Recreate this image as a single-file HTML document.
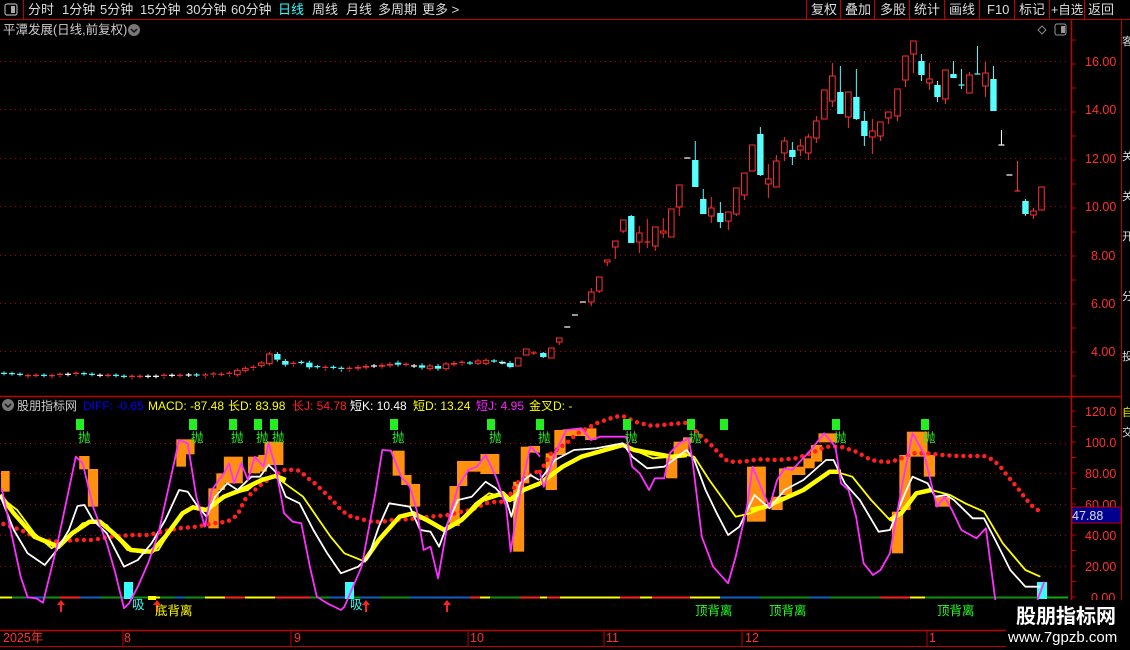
<!DOCTYPE html>
<html><head><meta charset="utf-8">
<style>
body{margin:0;background:#000;width:1130px;height:650px;overflow:hidden;font-family:"Liberation Sans","Noto Sans CJK SC",sans-serif;}
svg{position:absolute;left:0;top:0}
text{font-family:"Liberation Sans","Noto Sans CJK SC",sans-serif}
</style></head><body>
<svg id="s" width="1130" height="650" xmlns="http://www.w3.org/2000/svg">
<rect width="1130" height="650" fill="#000"/>
<line x1="0" y1="19.5" x2="1130" y2="19.5" stroke="#c00000"/>
<line x1="23.5" y1="0" x2="23.5" y2="19" stroke="#c00000"/>
<rect x="5" y="4" width="12" height="11" rx="2" fill="none" stroke="#aaa" stroke-width="1.2"/><rect x="11" y="6" width="4" height="7" fill="#aaa"/>
<g font-size="13" fill="#ddd">
<text x="28" y="14">分时</text><text x="62" y="14">1分钟</text><text x="100" y="14">5分钟</text><text x="140" y="14">15分钟</text><text x="186" y="14">30分钟</text><text x="231" y="14">60分钟</text>
<text x="278" y="14" fill="#3ff">日线</text><text x="312" y="14">周线</text><text x="346" y="14">月线</text><text x="378" y="14">多周期</text><text x="422" y="14">更多 &gt;</text>
<text x="811" y="14">复权</text><text x="845" y="14">叠加</text><text x="880" y="14">多股</text><text x="914" y="14">统计</text><text x="949" y="14">画线</text><text x="987" y="14">F10</text><text x="1019" y="14">标记</text><text x="1051" y="14" font-size="12.5">+自选</text><text x="1088" y="14">返回</text>
</g>
<g stroke="#c00000"><line x1="806.5" y1="0" x2="806.5" y2="19"/><line x1="840.5" y1="0" x2="840.5" y2="19"/><line x1="874.5" y1="0" x2="874.5" y2="19"/><line x1="909.5" y1="0" x2="909.5" y2="19"/><line x1="944.5" y1="0" x2="944.5" y2="19"/><line x1="979.5" y1="0" x2="979.5" y2="19"/><line x1="1014.5" y1="0" x2="1014.5" y2="19"/><line x1="1049.5" y1="0" x2="1049.5" y2="19"/><line x1="1084.5" y1="0" x2="1084.5" y2="19"/></g>
<text x="3" y="34" font-size="12.5" fill="#ccc">平潭发展(日线,前复权)</text>
<circle cx="134" cy="30" r="6" fill="#777"/><path d="M131 29l3 3 3-3" stroke="#111" stroke-width="1.5" fill="none"/>
<path d="M1042 26l4 4-4 4-4-4z" fill="none" stroke="#888"/>
<rect x="1055" y="24" width="11" height="11" rx="2" fill="none" stroke="#999"/><rect x="1061" y="26" width="4" height="7" fill="#999"/>
<line x1="1071.5" y1="20" x2="1071.5" y2="630" stroke="#c00000" stroke-width="1.5"/>
<line x1="1121.5" y1="20" x2="1121.5" y2="600" stroke="#c00000"/>
<line x1="0" y1="396.5" x2="1121" y2="396.5" stroke="#c00000" stroke-width="1.5"/>
<line x1="0" y1="630.5" x2="1071" y2="630.5" stroke="#c00000" stroke-width="1.5"/>
<line x1="0" y1="646.5" x2="1071" y2="646.5" stroke="#c00000"/>
<g id="grid"></g>
<g font-size="12.5" fill="#ff3030">
<text x="1085" y="66">16.00</text><text x="1085" y="114">14.00</text><text x="1085" y="163">12.00</text><text x="1085" y="211">10.00</text><text x="1091" y="260">8.00</text><text x="1091" y="308">6.00</text><text x="1091" y="356">4.00</text>
<text x="1085" y="416">120.0</text><text x="1085" y="447">100.0</text><text x="1085" y="478">80.00</text><text x="1085" y="509">60.00</text><text x="1085" y="540">40.00</text><text x="1085" y="571">20.00</text><text x="1091" y="602">0.00</text>
</g>
<rect x="1072" y="507" width="49" height="16" fill="#000090" stroke="#c00000"/>
<text x="1072" y="520" font-size="12.5" fill="#ddd">47.88</text>
<g font-size="11" fill="#ddd"><text x="1122" y="45">客</text><text x="1122" y="160">关</text><text x="1122" y="200">关</text><text x="1122" y="240">开</text><text x="1122" y="300">分</text><text x="1122" y="360">投</text><text x="1122" y="416" fill="#ee0">自</text><text x="1122" y="436">交</text></g>
<circle cx="8" cy="405" r="6" fill="#777"/><path d="M5 404l3 3 3-3" stroke="#111" stroke-width="1.5" fill="none"/>
<g font-size="12"><text x="17" y="410" fill="#ccc">股朋指标网</text><text x="83" y="410" fill="#0000ff">DIFF: -0.65</text><text x="148" y="410" fill="#ff0">MACD: -87.48</text><text x="228" y="410" fill="#ff0">长D: 83.98</text><text x="292" y="410" fill="#f22">长J: 54.78</text><text x="350" y="410" fill="#fff">短K: 10.48</text><text x="413" y="410" fill="#ff0">短D: 13.24</text><text x="476" y="410" fill="#f2f">短J: 4.95</text><text x="529" y="410" fill="#ff0">金叉D: -</text></g>
<g id="c"></g>
<g font-size="12.5"><text x="132" y="609" fill="#3ff">吸</text><text x="350" y="609" fill="#3ff">吸</text><text x="155" y="615" fill="#ff0">底背离</text><text x="695" y="615" fill="#2f2">顶背离</text><text x="769" y="615" fill="#2f2">顶背离</text><text x="937" y="615" fill="#2f2">顶背离</text></g>
<g font-size="12.5" fill="#ff3030"><text x="3" y="642">2025年</text><text x="124" y="642">8</text><text x="294" y="642">9</text><text x="470" y="642">10</text><text x="606" y="642">11</text><text x="745" y="642">12</text><text x="929" y="642">1</text></g>
<g stroke="#c00000"><line x1="123" y1="630" x2="123" y2="646"/><line x1="291" y1="630" x2="291" y2="646"/><line x1="468" y1="630" x2="468" y2="646"/><line x1="604" y1="630" x2="604" y2="646"/><line x1="742" y1="630" x2="742" y2="646"/><line x1="927" y1="630" x2="927" y2="646"/></g>
<rect x="1006" y="600" width="124" height="50" fill="#000"/>
<text x="1016" y="623" font-size="20" font-weight="bold" fill="#fff">股朋指标网</text>
<text x="1008" y="642" font-size="15" fill="#fff">www.7gpzb.com</text>
</svg>
<script>
var NS="http://www.w3.org/2000/svg",g=document.getElementById('c'),gr=document.getElementById('grid');
function el(t,a,p){var e=document.createElementNS(NS,t);for(var k in a)e.setAttribute(k,a[k]);(p||g).appendChild(e);return e;}
[61,109,158,206,255,303,351,443,473,504,535,566].forEach(function(y){el('line',{x1:0,y1:y+.5,x2:1068,y2:y+.5,stroke:'#c00000','stroke-dasharray':'1 4'},gr);});
for(var y=40;y<390;y+=24)el('line',{x1:1071,y1:y,x2:1076,y2:y,stroke:'#c00000'},gr);
for(var y=411;y<600;y+=15.5)el('line',{x1:1071,y1:y,x2:1076,y2:y,stroke:'#c00000'},gr);
var RED='#ff3030',CY='#55ffff',WH='#fff';
function candle(x,t,b,h,l,k){
 var col=k=='c'?CY:(k=='w'?WH:RED);
 if(h<t)el('line',{x1:x,y1:h,x2:x,y2:t,stroke:col,'stroke-width':1});
 if(l>b)el('line',{x1:x,y1:b,x2:x,y2:l,stroke:col,'stroke-width':1});
 if(b-t<1.5){el('line',{x1:x-3,y1:t,x2:x+3,y2:t,stroke:col,'stroke-width':1.2});return;}
 if(k=='r')el('rect',{x:x-2.8,y:t,width:5.6,height:b-t,fill:'none',stroke:col,'stroke-width':1});
 else el('rect',{x:x-3.2,y:t,width:6.4,height:b-t,fill:col});
}
var L=[[12,130,130,'c'],[36,131,131,'c'],[60,133,133,'c'],[84,137,139,'R'],[108,136,136,'R'],[132,136,136,'c'],[156,137,139,'R'],[180,133,136,'R'],[204,133,133,'w'],[228,130,133,'R'],[252,131,131,'c'],[276,133,133,'c'],[300,136,136,'w'],[324,136,136,'R'],[348,136,136,'c'],[372,139,139,'c'],[396,139,142,'R'],[420,139,139,'R'],[444,139,139,'w'],[468,139,139,'w'],[492,136,140,'R'],[516,136,136,'w'],[540,136,136,'R'],[566,135,135,'w'],[590,135,135,'c'],[616,135,139,'R'],[640,132,136,'R'],[664,133,133,'R'],[688,130,134,'R'],[712,121,134,'r'],[736,115,121,'r'],[760,112,116,'R'],[784,99,107,'r'],[808,72,101,'r'],[832,72,89,'c'],[856,93,104,'c'],[880,100,104,'R'],[904,97,97,'c'],[928,98,112,'c'],[952,110,110,'c'],[976,112,116,'R'],[1000,112,112,'c'],[1024,115,119,'c'],[1048,115,119,'R'],[1074,111,116,'R'],[1098,108,113,'R'],[1122,108,108,'w'],[1146,105,110,'R'],[1170,102,107,'R'],[1194,98,104,'c'],[1218,103,103,'R'],[1242,108,108,'w'],[1266,106,113,'c'],[1290,108,116,'r'],[1314,108,116,'c'],[1338,102,116,'r'],[1362,99,104,'R'],[1386,97,101,'R'],[1410,99,99,'c'],[1434,93,100,'r'],[1458,91,100,'r'],[1482,93,93,'c'],[1506,97,97,'c'],[1530,99,109,'c']];
L.forEach(function(c){var t=330+c[1]/3,b=330+c[2]/3;candle(c[0]/3,t,b,t-2,b+2,c[3]);});
// right candles: [zx, top, bot, hi, lo, kind] with y already in px
var R=[[8,363,363,363,363,'w'],[29,363,367,363,367,'c'],[50,358,366,358,366,'r'],[72,349,355,349,355,'r'],[93,353,353,351,355,'r'],[119,353,357,352,358,'c'],[141,348,358,348,358,'r'],[163,338,342,338,345,'r'],[185,327,327,327,327,'w'],[206,315,315,315,315,'w'],[228,302,302,302,302,'w'],[251,292,302,288,306,'r'],[273,277,291,277,293,'r'],[295,260,262,260,266,'r'],[317,241,247,241,259,'r'],[339,220,231,220,233,'r'],[361,216,243,215,243,'c'],[383,233,242,226,253,'r'],[405,242,242,219,248,'r'],[427,227,246,227,251,'r'],[449,231,233,218,238,'r'],[471,209,237,209,237,'r'],[493,185,207,185,216,'r'],[515,158,158,158,158,'w'],[537,160,187,141,187,'c'],[559,199,214,189,214,'c'],[581,208,216,197,223,'r'],[606,213,222,202,228,'c'],[628,212,221,212,230,'r'],[650,188,214,188,216,'r'],[672,173,195,173,200,'r'],[694,145,171,145,171,'r'],[716,134,175,127,176,'c'],[738,179,184,164,198,'r'],[760,161,187,155,187,'r'],[782,141,153,137,161,'r'],[804,150,157,142,165,'c'],[826,146,150,139,156,'r'],[848,137,153,134,160,'r'],[870,121,138,116,143,'r'],[892,90,119,90,119,'r'],[914,76,101,63,107,'r'],[936,92,114,66,114,'c'],[958,92,117,92,128,'r'],[980,97,119,69,120,'c'],[1002,121,136,111,146,'c'],[1024,131,137,119,154,'r'],[1046,122,136,122,141,'r'],[1068,112,118,112,124,'r'],[1093,89,116,89,121,'r'],[1115,56,80,56,87,'r'],[1137,41,54,41,73,'r'],[1159,61,75,54,81,'c'],[1181,79,83,63,90,'r'],[1203,85,97,81,102,'c'],[1225,70,99,70,104,'r'],[1247,74,78,61,78,'c'],[1269,85,85,69,89,'c'],[1291,75,93,72,93,'r'],[1313,74,74,46,74,'c'],[1335,73,86,62,97,'r'],[1357,79,111,66,111,'c'],[1379,145,145,130,145,'w'],[1401,175,175,175,175,'w'],[1423,191,191,161,191,'r'],[1445,201,214,199,216,'c'],[1467,211,215,208,219,'r'],[1489,187,210,187,210,'r']];
R.forEach(function(c){candle(500+c[0]/2.75,c[1],c[2],c[3],c[4],c[5]);});
var S7=1568/540,S8=1568/590;
function pl(pts,ox,sx,col,w,dash){var s=pts.map(function(p){return (ox+p[0]/sx).toFixed(1)+','+(400+p[1]/3).toFixed(1)}).join(' ');var a={points:s,fill:'none',stroke:col,'stroke-width':w,'stroke-linejoin':'round'};if(dash){a['stroke-dasharray']='0 7';a['stroke-linecap']='round';}el('polyline',a);}
function blocks(b,ox,sx){b.forEach(function(r){el('rect',{x:ox+r[0]/sx,y:400+r[1]/3,width:r[2]/sx,height:r[3]/3,fill:'#ff9010'});});}
blocks([[3,213,25,62],[230,168,30,40],[255,207,30,113],[512,118,28,82],[540,118,25,45],[605,265,30,120],[628,220,25,50],[650,170,55,80],[720,170,35,50],[750,165,25,50],[768,125,55,70],[1140,152,35,75],[1165,225,30,30],[1190,252,30,68],[1305,258,30,120],[1327,183,30,75],[1355,183,50,32],[1395,162,55,60],[1490,245,32,210],[1512,140,25,110],[1535,138,33,20]],0,S7);
blocks([[15,160,30,110],[38,90,30,75],[60,88,65,20],[120,85,30,35],[335,165,30,70],[355,125,40,40],[380,112,25,15],[550,200,50,165],[575,200,25,80],[615,290,30,40],[635,205,35,80],[655,200,50,25],[700,175,30,30],[720,135,30,50],[740,100,50,27],[935,335,30,125],[955,165,30,165],[975,95,55,75],[1020,165,30,65],[1050,290,40,30]],540,S8);
el('line',{x1:0,y1:597.5,x2:1068,y2:597.5,stroke:'#109010','stroke-width':2});
[[0,12,'#ff0'],[25,45,'#1060c0'],[60,80,'#f22'],[80,100,'#1060c0'],[152,160,'#ff0'],[175,185,'#1060c0'],[205,225,'#ff0'],[225,245,'#f22'],[245,275,'#ff0'],[275,310,'#f22'],[330,345,'#1060c0'],[360,380,'#1060c0'],[410,470,'#1060c0'],[470,480,'#f22'],[480,490,'#ff0'],[520,540,'#f22'],[540,547,'#ff0'],[547,560,'#f22'],[560,620,'#ff0'],[620,640,'#f22'],[640,652,'#ff0'],[652,690,'#f22'],[690,720,'#ff0'],[720,760,'#1060c0'],[810,830,'#1060c0'],[880,910,'#f22'],[910,925,'#ff0'],[1040,1068,'#1a1']].forEach(function(s){el('line',{x1:s[0],y1:597.5,x2:s[1],y2:597.5,stroke:s[2],'stroke-width':2});});
el('rect',{x:124,y:582,width:9,height:17,fill:'#3ff'});el('rect',{x:345,y:582,width:9,height:17,fill:'#3ff'});el('rect',{x:1037,y:582,width:10,height:17,fill:'#3ff'});
el('rect',{x:148,y:596,width:8,height:4,fill:'#ff0'});
[61,157,366,447].forEach(function(x){el('path',{d:'M'+x+' 600l-4 5h3v7h2v-7h3z',fill:'#f22'});});
pl([[10,372],[60,390],[120,420],[170,425],[220,420],[270,420],[320,410],[380,405],[430,405],[470,395],[520,385],[570,380],[620,370],[660,365],[690,345],[710,300],[750,260],[790,230],[830,208],[870,212],[895,235],[920,255],[940,275],[965,300],[990,330],[1015,348],[1040,355],[1080,365],[1110,365],[1140,360],[1180,358],[1210,355],[1250,350],[1300,345],[1340,335],[1370,330],[1410,310],[1440,305],[1470,305],[1500,250],[1530,230],[1560,215]],0,S7,'#ff2020',4.5,1);
pl([[0,215],[30,160],[70,130],[100,100],[150,70],[200,50],[220,48],[260,68],[300,78],[350,72],[390,68],[410,90],[455,135],[480,165],[500,185],[540,185],[580,178],[630,180],[680,175],[720,160],[760,140],[800,140],[840,155],[880,180],[920,187],[950,180],[990,160],[1030,160],[1070,165],[1110,168],[1180,168],[1205,180],[1225,202],[1245,232],[1268,262],[1290,295],[1310,320],[1330,335]],540,S8,'#ff2020',4.5,1);
pl([[0,290],[50,330],[100,400],[150,445],[200,410],[240,370],[270,365],[310,375],[370,450],[420,460],[460,450],[520,350],[560,320],[600,330],[640,300],[680,280],[720,270],[760,235],[800,230],[840,260],[880,290],[920,350],[960,410],[1000,460],[1060,485],[1100,420],[1150,360],[1190,340],[1220,355],[1250,370],[1290,390],[1330,370],[1380,310],[1420,280],[1460,290],[1490,300],[1520,270],[1568,255]],0,S7,'#ff0',1.8);
pl([[0,250],[60,200],[110,170],[220,135],[250,150],[300,175],[350,170],[390,165],[410,170],[450,240],[520,350],[560,340],[600,320],[700,270],[770,215],[800,220],[830,230],[880,300],[930,360],[960,340],[1000,280],[1040,270],[1090,285],[1130,310],[1180,335],[1230,430],[1290,510],[1330,530]],540,S8,'#ff0',1.8);
pl([[0,285],[40,340],[100,410],[170,440],[210,400],[260,365],[290,365],[330,400],[380,450],[440,455],[480,410],[530,340],[560,322],[600,330],[650,290],[700,270],[760,240],[800,228],[830,240]],0,S7,'#ff0',4.5);
pl([[1060,480],[1100,420],[1160,350],[1200,340],[1240,360],[1290,390],[1340,360],[1400,300],[1460,280],[1480,300],[1520,270],[1568,250]],0,S7,'#ff0',4.5);
pl([[0,250],[60,200],[110,170],[220,135],[250,150],[350,170],[390,165]],540,S8,'#ff0',4.5);
pl([[560,330],[600,320],[700,270],[770,215],[800,215]],540,S8,'#ff0',4.5);
pl([[930,360],[960,340],[1000,280],[1040,270]],540,S8,'#ff0',4.5);
pl([[0,285],[40,390],[80,460],[130,495],[165,450],[200,390],[225,318],[245,315],[270,360],[310,400],[360,500],[400,480],[440,430],[480,360],[520,270],[545,275],[575,320],[600,350],[625,290],[660,250],[690,270],[730,230],[755,230],[780,195],[800,215],[830,290],[870,310],[910,390],[950,460],[990,520],[1040,500],[1070,470],[1100,380],[1130,310],[1160,315],[1190,320],[1220,390],[1250,395],[1275,440],[1300,370],[1330,300],[1370,290],[1410,245],[1440,265],[1470,300],[1485,350],[1510,250],[1540,225],[1565,240]],0,S7,'#fff',1.8);
pl([[0,240],[40,180],[90,150],[150,145],[220,130],[245,170],[285,205],[330,200],[390,150],[410,180],[440,270],[470,340],[500,405],[530,380],[570,285],[610,325],[650,270],[700,240],[760,180],[780,180],[810,250],[850,300],[900,395],[930,390],[970,280],[990,230],[1030,250],[1050,290],[1080,285],[1100,300],[1150,355],[1180,355],[1210,420],[1250,510],[1290,560],[1330,560]],540,S8,'#fff',1.8);
pl([[5,265],[60,530],[80,592],[105,595],[125,608],[165,440],[220,170],[240,190],[270,320],[310,430],[335,520],[360,625],[375,610],[400,560],[430,490],[460,400],[490,260],[520,120],[545,130],[570,290],[595,380],[615,270],[650,220],[665,190],[680,250],[700,190],[720,240],[740,170],[765,200],[780,130],[800,200],[825,340],[850,365],[875,370],[900,500],[920,590],[950,610],[990,630],[1000,620],[1050,500],[1090,280],[1110,150],[1135,152],[1165,230],[1190,260],[1210,330],[1230,450],[1250,440],[1272,535],[1300,370],[1330,260],[1360,210],[1385,200],[1410,165],[1440,230],[1470,320],[1483,455],[1500,340],[1520,230],[1540,140],[1560,160],[1568,170]],0,S7,'#ff30ff',1.8);
pl([[0,220],[10,260],[40,160],[70,90],[110,85],[135,120],[160,110],[230,110],[245,200],[265,220],[290,270],[305,235],[330,235],[345,160],[370,130],[395,115],[405,180],[430,410],[460,500],[500,550],[520,470],[550,320],[565,200],[590,270],[610,320],[630,240],[650,205],[670,210],[720,150],[755,100],[785,140],[800,250],[820,270],[840,350],[860,490],[885,525],[905,510],[930,460],[965,240],[990,100],[1020,160],[1055,320],[1075,290],[1095,330],[1120,390],[1160,415],[1185,385],[1210,600]],540,S8,'#ff30ff',1.8);
pl([[1322,600],[1332,570],[1340,545]],540,S8,'#ff30ff',1.8);
[80,193,233,258,274,394,491,540,627,691,836,925].forEach(function(x){el('rect',{x:x-4,y:419,width:8,height:11,fill:'#22ee22'});var t=el('text',{x:x-2,y:442,'font-size':12.5,fill:'#22ee22'});t.textContent='抛';});
el('rect',{x:720,y:419,width:8,height:11,fill:'#22ee22'});
</script>
</body></html>
